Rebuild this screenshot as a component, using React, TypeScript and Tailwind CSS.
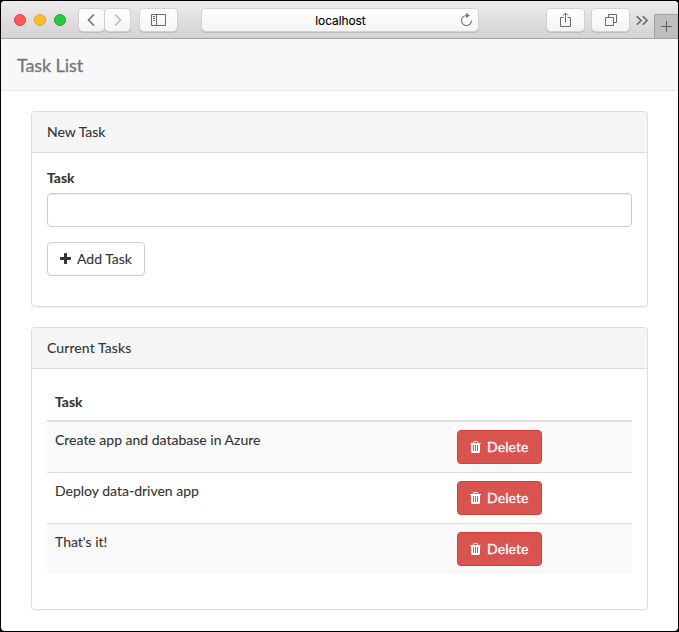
import type { ReactNode } from 'react';

const chromeButton =
  'flex h-[22px] items-center justify-center rounded-[4px] bg-linear-to-b from-white to-[#f4f4f4] shadow-[0_0_0_1px_#d3d1d3,0_1px_0_1px_#bdbbbd] text-[#6a6a6a]';

function PlusIcon() {
  return (
    <svg viewBox="192 0 1408 1792" width="11" height="14" fill="currentColor">
      <path d="M1600 736v192q0 40-28 68t-68 28h-416v416q0 40-28 68t-68 28h-192q-40 0-68-28t-28-68v-416h-416q-40 0-68-28t-28-68v-192q0-40 28-68t68-28h416v-416q0-40 28-68t68-28h192q40 0 68 28t28 68v416h416q40 0 68 28t28 68z" />
    </svg>
  );
}

function TrashIcon() {
  return (
    <svg viewBox="192 0 1408 1792" width="11" height="14" fill="currentColor">
      <path d="M704 1376v-704q0-14-9-23t-23-9h-64q-14 0-23 9t-9 23v704q0 14 9 23t23 9h64q14 0 23-9t9-23zm256 0v-704q0-14-9-23t-23-9h-64q-14 0-23 9t-9 23v704q0 14 9 23t23 9h64q14 0 23-9t9-23zm256 0v-704q0-14-9-23t-23-9h-64q-14 0-23 9t-9 23v704q0 14 9 23t23 9h64q14 0 23-9t9-23zm-544-992h448l-48-117q-7-9-17-11h-317q-10 2-17 11zm928 32v64q0 14-9 23t-23 9h-96v948q0 83-47 143.5t-113 60.5h-832q-66 0-113-58.5t-47-141.5v-952h-96q-14 0-23-9t-9-23v-64q0-14 9-23t23-9h309l70-167q15-37 54-63t79-26h320q40 0 79 26t54 63l70 167h309q14 0 23 9t9 23z" />
    </svg>
  );
}

function Toolbar() {
  return (
    <div className="flex h-[38px] shrink-0 items-start border-b border-[#a3a1a3] bg-linear-to-b from-[#eeebee] to-[#d4d2d4] pl-[13px]">
      <div className="mt-[13px] flex gap-2">
        <i className="size-3 rounded-full border border-[#e2463f] bg-[#fc5b57]" />
        <i className="size-3 rounded-full border border-[#e0a02b] bg-[#fdbc2e]" />
        <i className="size-3 rounded-full border border-[#1eaa31] bg-[#28c940]" />
      </div>
      <div className="mt-2 ml-[13px] flex gap-px">
        <button className={`${chromeButton} w-[25px] pr-px`}>
          <svg width="8" height="12" viewBox="0 0 8 12" fill="none" stroke="currentColor" strokeWidth="1.5">
            <path d="M7 .5L1.500 6 7 11.500" />
          </svg>
        </button>
        <button className={`${chromeButton} w-[25px] pl-px`}>
          <svg width="8" height="12" viewBox="0 0 8 12" fill="none" stroke="#b8b8b8" strokeWidth="1.5">
            <path d="M1 .5L6.500 6 1 11.500" />
          </svg>
        </button>
      </div>
      <button className={`${chromeButton} mt-2 ml-[10px] w-[37px]`}>
        <svg width="15" height="12" viewBox="0 0 15 12" fill="none" stroke="currentColor">
          <path d="M.5 .5h14v11H.5zM5.500 .5v11M2 2.500h2M2 4.500h2M2 6.500h2" />
        </svg>
      </button>
      <div className="mt-2 ml-[25px] flex h-[22px] w-[276px] items-center rounded-[4px] bg-linear-to-b from-white to-[#f4f4f4] pr-[5px] pl-[19px] shadow-[0_0_0_1px_#d3d1d3,0_1px_0_1px_#bdbbbd]">
        <span className="flex-1 pt-px text-center font-[Inter,sans-serif] text-[12px] tracking-[-0.1px] text-black">localhost</span>
        <svg width="13" height="15" viewBox="0 0 13 15" fill="none" stroke="#777" strokeWidth="1.100">
          <path d="M6.500 2.500A5 5 0 1 0 11.500 7.500" />
          <path d="M6 0L10 2.500 6 5z" fill="#777" stroke="none" />
        </svg>
      </div>
      <button className={`${chromeButton} mt-2 ml-[69px] w-[37px]`}>
        <svg className="mb-[1px]" width="11" height="15" viewBox="0 0 11 15" fill="none" stroke="currentColor">
          <path d="M3.500 5.500h-3v9h10v-9h-3M5.500 10.500V1M3 3.500L5.500 1 8 3.500" />
        </svg>
      </button>
      <button className={`${chromeButton} mt-2 ml-2 w-[37px]`}>
        <svg width="12" height="12" viewBox="0 0 12 12" fill="none" stroke="currentColor">
          <path d="M.5 3.500h8v8h-8zM3.500 3V.5h8v8H9" />
        </svg>
      </button>
      <svg className="mt-[14px] ml-[7px]" width="12" height="11" viewBox="0 0 12 11" fill="none" stroke="#666" strokeWidth="1.600">
        <path d="M.8 1.200l4.300 4.300-4.300 4.300M6.800 1.200l4.300 4.300-4.300 4.300" />
      </svg>
      <div className="mt-[13px] ml-auto flex h-6 w-6 items-center justify-center border-t border-l border-[#a3a1a3] bg-[#bfbdbf] pb-px">
        <svg width="11" height="11" viewBox="0 0 11 11" fill="none" stroke="#5e5e5e">
          <path d="M5.500 0v11M0 5.500h11" />
        </svg>
      </div>
    </div>
  );
}

function Panel({ title, children }: { title: ReactNode; children: ReactNode }) {
  return (
    <section className="rounded-[4px] border border-[#ddd] bg-white shadow-[0_1px_1px_rgba(0,0,0,0.05)]">
      <h2 className="rounded-t-[3px] border-b border-[#ddd] bg-[#f5f5f5] px-[15px] py-[10px]">{title}</h2>
      <div className="p-[15px]">{children}</div>
    </section>
  );
}

const tasks = ['Create app and database in Azure', 'Deploy data-driven app', "That's it!"];

export default function App() {
  return (
    <div className="h-[632px] w-[679px] bg-black p-px font-[Lato,sans-serif] text-[14px] leading-5 text-[#333] [-webkit-text-stroke:0.1px]">
      <div className="flex h-[630px] w-[677px] flex-col overflow-hidden rounded-[4px] bg-white">
        <Toolbar />
        <nav className="flex h-[52px] shrink-0 items-center border-b border-[#e7e7e7] bg-[#f8f8f8] pl-4 text-[18px] tracking-[-0.1px] text-[#777] [-webkit-text-stroke:0.3px]">
          Task List
        </nav>
        <main className="flex flex-col gap-5 pt-5 pr-[30px] pl-[30px]">
          <Panel title="New Task">
            <label htmlFor="task" className="mb-[5px] block font-bold">Task</label>
            <input
              id="task"
              className="block h-[34px] w-full rounded-[4px] border border-[#ccc] bg-white px-3 shadow-[inset_0_1px_1px_rgba(0,0,0,0.075)]"
            />
            <button className="my-[15px] flex h-[34px] items-center gap-[6px] rounded-[4px] border border-[#ccc] bg-white px-3">
              <PlusIcon />
              Add Task
            </button>
          </Panel>
          <Panel title={<span className="tracking-[0.1px]">Current Tasks</span>}>
            <table className="mb-5 w-full border-separate border-spacing-0">
              <thead>
                <tr>
                  <th className="w-[402px] border-b-2 border-[#ddd] p-2 text-left font-bold">Task</th>
                  <th className="border-b-2 border-[#ddd] p-2" />
                </tr>
              </thead>
              <tbody>
                {tasks.map((task) => (
                  <tr key={task} className="group odd:bg-[#f9f9f9]">
                    <td className="border-t border-[#ddd] p-2 align-top group-first:border-t-0">{task}</td>
                    <td className="border-t border-[#ddd] p-2 align-top group-first:border-t-0">
                      <button className="flex h-[34px] w-[85px] items-center gap-[6px] rounded-[4px] border border-[#d43f3a] bg-[#d9534f] pl-3 tracking-[0.1px] text-white [-webkit-text-stroke:0.3px]">
                        <TrashIcon />
                        Delete
                      </button>
                    </td>
                  </tr>
                ))}
              </tbody>
            </table>
          </Panel>
        </main>
      </div>
    </div>
  );
}
